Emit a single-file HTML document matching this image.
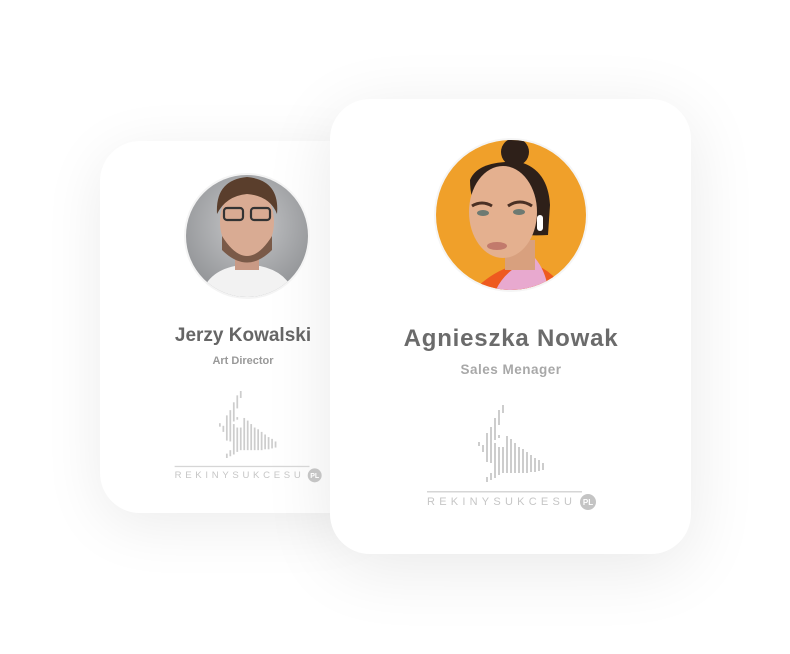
<!DOCTYPE html>
<html><head><meta charset="utf-8"><style>
body{margin:0;width:790px;height:654px;background:#fff;position:relative;overflow:hidden;font-family:"Liberation Sans",sans-serif}
.card{position:absolute;background:#fff;border-radius:40px;box-shadow:0 12px 60px rgba(0,0,0,0.08)}
.t{position:absolute;text-align:center;font-weight:bold}
</style></head><body>
<div class="card" style="left:100px;top:141px;width:270px;height:372px"></div>
<div class="card" style="left:330px;top:99px;width:361px;height:455px;box-shadow:0 14px 70px rgba(0,0,0,0.09)"></div>

<svg width="790" height="654" style="position:absolute;left:0;top:0">
<defs>
<clipPath id="c1"><circle cx="247" cy="236" r="61"/></clipPath>
<clipPath id="c2"><circle cx="511" cy="215" r="75"/></clipPath>
<radialGradient id="bg1" cx="0.5" cy="0.4" r="0.6"><stop offset="0" stop-color="#c8c9cb"/><stop offset="1" stop-color="#8d8f92"/></radialGradient>
<g id="logo" fill="#cdcdcd">
<rect x="0" y="37" width="2" height="4"/>
<rect x="4" y="40" width="2" height="7"/>
<rect x="8" y="28" width="2" height="29"/><rect x="8" y="72" width="2" height="5"/>
<rect x="12" y="22" width="2" height="36"/><rect x="12" y="68" width="2" height="7"/>
<rect x="16" y="13" width="2" height="22"/><rect x="16" y="38" width="2" height="35"/>
<rect x="20" y="5" width="2" height="15"/><rect x="20" y="30" width="2" height="3"/><rect x="20" y="42" width="2" height="28"/>
<rect x="24" y="0" width="2" height="8"/><rect x="24" y="42" width="2" height="26"/>
<rect x="28" y="31" width="2" height="37"/>
<rect x="32" y="34" width="2" height="34"/>
<rect x="36" y="38" width="2" height="30"/>
<rect x="40" y="42" width="2" height="26"/>
<rect x="44" y="44" width="2" height="24"/>
<rect x="48" y="47" width="2" height="21"/>
<rect x="52" y="50" width="2" height="17"/>
<rect x="56" y="53" width="2" height="14"/>
<rect x="60" y="55" width="2" height="11"/>
<rect x="64" y="58" width="2" height="7"/>
<rect x="-51" y="86" width="155" height="1.5" fill="#d6d6d6"/>
<text x="-51" y="100" font-size="11" fill="#c6c6c6" textLength="145" lengthAdjust="spacing" font-family="Liberation Sans, sans-serif">REKINYSUKCESU</text>
<circle cx="110" cy="97" r="8" fill="#c4c4c4"/>
<text x="110" y="100" font-size="8" fill="#fff" text-anchor="middle" font-weight="bold" font-family="Liberation Sans, sans-serif">PL</text>
</g>
</defs>

<circle cx="247" cy="236" r="63" fill="#f4f4f4"/>
<g clip-path="url(#c1)">
<rect x="180" y="170" width="135" height="135" fill="url(#bg1)"/>
<path d="M200 300 Q205 272 235 266 L260 266 Q290 272 296 300 Z" fill="#f2f2f2"/>
<rect x="235" y="245" width="24" height="25" fill="#c99a85"/>
<ellipse cx="247" cy="222" rx="27" ry="36" fill="#d9ab93"/>
<path d="M222 236 Q247 276 272 236 L272 250 Q247 275 222 250Z" fill="#7a5a48"/>
<path d="M217 214 Q215 180 247 177 Q280 180 277 214 Q270 196 247 194 Q226 196 217 214Z" fill="#5a3e2c"/>
<rect x="224" y="208" width="19" height="12" rx="3" fill="none" stroke="#333" stroke-width="2.2"/>
<rect x="251" y="208" width="19" height="12" rx="3" fill="none" stroke="#333" stroke-width="2.2"/>
</g>

<circle cx="511" cy="215" r="77" fill="#f5f5f5"/>
<g clip-path="url(#c2)">
<rect x="430" y="135" width="165" height="165" fill="#f0a02a"/>
<path d="M470 295 Q490 270 525 262 Q555 268 565 295Z" fill="#ee5a1f"/>
<path d="M495 292 Q505 268 535 258 Q545 270 548 288Z" fill="#e8a9cf"/>
<rect x="505" y="240" width="30" height="30" fill="#d8a07e"/>
<path d="M470 180 Q478 160 520 162 Q548 170 550 205 L548 235 Q470 240 470 180Z" fill="#2e2019"/>
<ellipse cx="503" cy="212" rx="34" ry="46" fill="#e4b08f"/>
<circle cx="515" cy="152" r="14" fill="#2e2019"/>
<rect x="537" y="215" width="6" height="16" rx="3" fill="#fff"/>
<path d="M472 206 Q482 200 492 206 M508 206 Q520 198 532 206" stroke="#4a3024" stroke-width="3" fill="none"/>
<ellipse cx="483" cy="213" rx="6" ry="3" fill="#6d7a72"/>
<ellipse cx="519" cy="212" rx="6" ry="3" fill="#6d7a72"/>
<ellipse cx="497" cy="246" rx="10" ry="4" fill="#c27a6c"/>
</g>

<use href="#logo" transform="translate(219,391) scale(0.87)"/>
<use href="#logo" transform="translate(478,405)"/>
</svg>

<div class="t" style="left:140px;width:206px;top:325px;font-size:19px;color:#666;letter-spacing:0">Jerzy Kowalski</div>
<div class="t" style="left:140px;width:206px;top:355px;font-size:11px;color:#999">Art Director</div>
<div class="t" style="left:380px;width:262px;top:325px;font-size:24px;color:#6b6b6b;letter-spacing:0.8px">Agnieszka Nowak</div>
<div class="t" style="left:380px;width:262px;top:362px;font-size:13.5px;color:#a8a8a8;letter-spacing:0.5px">Sales Menager</div>
</body></html>
